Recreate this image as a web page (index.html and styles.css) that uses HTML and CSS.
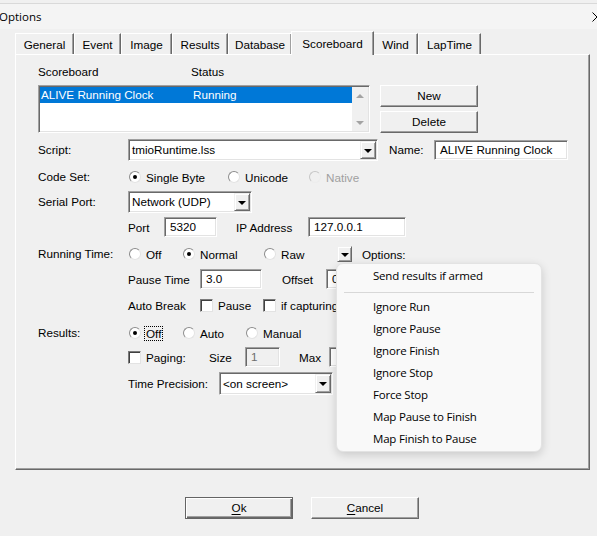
FILE: index.html
```html
<!DOCTYPE html>
<html>
<head>
<meta charset="utf-8">
<title>Options</title>
<link rel="stylesheet" href="styles.css">
</head>
<body>
<div class="window">
  <div class="topstrip"></div>
  <div class="titlebar">
    <span class="title">Options</span>
    <svg class="close" width="10" height="10" viewBox="0 0 10 10"><path d="M0.5 0.5 L9.5 9.5 M9.5 0.5 L0.5 9.5" stroke="#000" stroke-width="1" fill="none"/></svg>
  </div>
  <div class="tabs">
    <div class="tab t59">General</div>
    <div class="tab t47">Event</div>
    <div class="tab t51">Image</div>
    <div class="tab t56">Results</div>
    <div class="tab t64">Database</div>
    <div class="tab t81 active">Scoreboard</div>
    <div class="tab t45">Wind</div>
    <div class="tab t63">LapTime</div>
  </div>
  <div class="panel">
    <div class="hdr"><span class="hdr-name">Scoreboard</span><span>Status</span></div>
    <div class="listrow">
      <div class="listbox">
        <div class="listitems">
          <div class="item sel"><span class="c1">ALIVE Running Clock</span><span>Running</span></div>
        </div>
        <div class="vscroll"><i class="sarrow up"></i><i class="sarrow down"></i></div>
      </div>
      <div class="btncol">
        <button class="btn">New</button>
        <button class="btn">Delete</button>
      </div>
    </div>

    <div class="row r-script">
      <span class="lbl">Script:</span>
      <div class="combo w250 h22"><span class="val">tmioRuntime.lss</span><span class="dd"><i class="tri"></i></span></div>
      <span class="namelbl">Name:</span>
      <div class="field w134 h20">ALIVE Running Clock</div>
    </div>

    <div class="row r-codeset">
      <span class="lbl">Code Set:</span>
      <span class="opt first w99"><i class="radio on"></i>Single Byte</span>
      <span class="opt w81"><i class="radio"></i>Unicode</span>
      <span class="opt dis"><i class="radio"></i>Native</span>
    </div>

    <div class="row r-serial">
      <span class="lbl">Serial Port:</span>
      <div class="combo w124 h22"><span class="val">Network (UDP)</span><span class="dd"><i class="tri"></i></span></div>
    </div>

    <div class="row r-port sub">
      <span class="w36">Port</span>
      <div class="field w53 h20">5320</div>
      <span class="iplbl">IP Address</span>
      <div class="field w98 h20">127.0.0.1</div>
    </div>

    <div class="row r-running">
      <span class="lbl">Running Time:</span>
      <span class="opt first w54"><i class="radio"></i>Off</span>
      <span class="opt w81"><i class="radio on"></i>Normal</span>
      <span class="opt w73"><i class="radio"></i>Raw</span>
      <span class="ddbtn"><i class="tri"></i></span>
      <span>Options:</span>
    </div>

    <div class="row r-pause sub">
      <span class="w72">Pause Time</span>
      <div class="field w62 h20">3.0</div>
      <span class="offlbl">Offset</span>
      <div class="field w60 h20">0</div>
    </div>

    <div class="row r-auto sub">
      <span class="w72">Auto Break</span>
      <span class="opt w63"><i class="check"></i>Pause</span>
      <span class="opt"><i class="check"></i>if capturing</span>
    </div>

    <div class="row r-results">
      <span class="lbl">Results:</span>
      <span class="opt first w54"><i class="radio on"></i><span class="focus">Off</span></span>
      <span class="opt w63"><i class="radio"></i>Auto</span>
      <span class="opt"><i class="radio"></i>Manual</span>
    </div>

    <div class="row r-paging sub">
      <span class="opt w81"><i class="check"></i>Paging:</span>
      <span class="w36">Size</span>
      <div class="field disabled w35 h20">1</div>
      <span class="maxlbl">Max</span>
      <div class="field w40 h20"></div>
    </div>

    <div class="row r-tprec sub">
      <span class="w91">Time Precision:</span>
      <div class="combo w114 h23"><span class="val">&lt;on screen&gt;</span><span class="dd"><i class="tri"></i></span></div>
    </div>
  </div>

  <div class="footer">
    <button class="btn big def"><u>O</u>k</button>
    <button class="btn big"><u>C</u>ancel</button>
  </div>

  <div class="menu">
    <div class="mi">Send results if armed</div>
    <div class="msep"></div>
    <div class="mi">Ignore Run</div>
    <div class="mi">Ignore Pause</div>
    <div class="mi">Ignore Finish</div>
    <div class="mi">Ignore Stop</div>
    <div class="mi">Force Stop</div>
    <div class="mi">Map Pause to Finish</div>
    <div class="mi">Map Finish to Pause</div>
  </div>
</div>
</body>
</html>
```

FILE: styles.css
```css
* { box-sizing: border-box; }
html, body { margin: 0; padding: 0; }
body {
  width: 597px;
  height: 536px;
  overflow: hidden;
  background: #f0f0f0;
  font-family: "Liberation Sans", Arial, sans-serif;
  font-size: 11.7px;
  color: #000;
}
.window { position: relative; width: 597px; height: 536px; overflow: hidden; }

.topstrip { height: 4px; border-bottom: 1px solid #d9d9d9; background: #f0f0f0; }
.titlebar {
  height: 25px;
  display: flex;
  align-items: center;
  justify-content: space-between;
  background: #f4f4f4;
  font-family: "Open Sans", "Noto Sans", sans-serif;
  font-size: 11.5px;
}
.title { margin-left: -1px; }
.close { margin-right: -5px; }

/* tabs */
.tabs { display: flex; align-items: flex-end; height: 25px; padding-left: 15px; }
.tab {
  height: 21px;
  display: flex;
  align-items: center;
  justify-content: center;
  border-top: 1px solid #fff;
  border-left: 1px solid #fff;
  border-right: 1px solid #696969;
  box-shadow: inset -1px 0 #a0a0a0;
  background: #f0f0f0;
  padding-top: 1px;
}
.tab.active {
  position: relative;
  height: 24px;
  margin: 0 -1px -1px;
  padding-bottom: 2px;
}
.t59 { width: 59px; } .t47 { width: 47px; } .t51 { width: 51px; } .t56 { width: 56px; }
.t64 { width: 64px; } .t81 { width: 81px; } .t45 { width: 45px; } .t63 { width: 63px; }
.tab.t81.active { width: 83px; }

/* panel */
.panel {
  margin-left: 15px;
  width: 575px;
  height: 416px;
  border-top: 1px solid #fff;
  border-left: 1px solid #fff;
  border-right: 1px solid #696969;
  border-bottom: 1px solid #696969;
  box-shadow: inset -1px -1px #a0a0a0;
  padding: 10px 0 0 22px;
}
.hdr { height: 14px; line-height: 14px; display: flex; }
.hdr-name { width: 153px; }

.listrow { margin-top: 6px; height: 48px; display: flex; }
.listbox {
  width: 332px;
  height: 48px;
  background: #fff;
  border: 1px solid;
  border-color: #a0a0a0 #fff #fff #a0a0a0;
  box-shadow: inset 1px 1px #696969, inset -1px -1px #e3e3e3;
  padding: 1px;
  display: flex;
}
.listitems { flex: 1; }
.item { height: 16px; line-height: 16px; display: flex; padding-left: 1px; }
.item.sel { background: #0078d7; color: #fff; }
.c1 { width: 152px; }
.vscroll {
  width: 16px;
  background: #f0f0f0;
  display: flex;
  flex-direction: column;
  justify-content: space-between;
  align-items: center;
  padding: 7px 0 6px;
}
.sarrow { width: 0; height: 0; border-left: 4px solid transparent; border-right: 4px solid transparent; }
.sarrow.up { border-bottom: 4px solid #a3a3a3; }
.sarrow.down { border-top: 4px solid #a3a3a3; }

.btncol { margin-left: 10px; display: flex; flex-direction: column; gap: 4px; }
.btn {
  font: inherit;
  color: #000;
  width: 98px;
  height: 22px;
  padding: 0 0 1px;
  background: #f0f0f0;
  border: 1px solid;
  border-color: #fff #696969 #696969 #fff;
  box-shadow: inset -1px -1px #a0a0a0;
}
.btn.big { width: 108px; }
.btn.def {
  border: 1px solid #646464;
  box-shadow: inset 1px 1px #fff, inset -1px -1px #696969, inset -2px -2px #a0a0a0;
}
.btn u { text-decoration: underline; text-underline-offset: 2px; }

/* rows */
.row { display: flex; align-items: center; white-space: nowrap; }
.row.sub { padding-left: 90px; }
.lbl { width: 90px; padding-bottom: 1px; }
.r-script { margin-top: 6px; height: 22px; }
.r-codeset { margin-top: 6px; height: 20px; }
.r-serial { margin-top: 4px; height: 22px; }
.r-port { margin-top: 4px; height: 20px; }
.r-running { margin-top: 7px; height: 20px; }
.r-pause { margin-top: 5px; height: 20px; }
.r-auto { margin-top: 7px; height: 18px; }
.r-results { margin-top: 10px; height: 18px; }
.r-paging { margin-top: 5px; height: 20px; }
.r-tprec { margin-top: 5px; height: 23px; }

.w35 { width: 35px; } .w36 { width: 36px; } .w40 { width: 40px; } .w53 { width: 53px; }
.w54 { width: 54px; } .w60 { width: 60px; } .w62 { width: 62px; } .w63 { width: 63px; }
.w72 { width: 72px; } .w73 { width: 73px; } .w81 { width: 81px; } .w91 { width: 91px; }
.w98 { width: 98px; } .w99 { width: 99px; } .w114 { width: 114px; } .w124 { width: 124px; }
.w134 { width: 134px; } .w250 { width: 250px; }
.h20 { height: 20px; } .h22 { height: 22px; } .h23 { height: 23px; }

.field {
  flex: none;
  background: #fff;
  border: 1px solid;
  border-color: #a0a0a0 #fff #fff #a0a0a0;
  box-shadow: inset 1px 1px #696969, inset -1px -1px #e3e3e3;
  padding-left: 5px;
  padding-bottom: 1px;
  display: flex;
  align-items: center;
}
.field.disabled { background: #f0f0f0; color: #6d6d6d; }

.combo {
  flex: none;
  background: #fff;
  border: 1px solid;
  border-color: #a0a0a0 #fff #fff #a0a0a0;
  box-shadow: inset 1px 1px #696969, inset -1px -1px #e3e3e3;
  padding: 1px;
  display: flex;
  align-items: stretch;
}
.combo .val { flex: 1; display: flex; align-items: center; padding-left: 2px; padding-bottom: 1px; }
.dd, .ddbtn {
  width: 16px;
  display: flex;
  align-items: center;
  justify-content: center;
  background: #f0f0f0;
  border: 1px solid;
  border-color: #f0f0f0 #696969 #696969 #f0f0f0;
  box-shadow: inset 1px 1px #fff, inset -1px -1px #a0a0a0;
}
.ddbtn { width: 15px; height: 16px; margin-left: 0; margin-right: 10px; }
.tri {
  width: 0; height: 0;
  border-left: 4px solid transparent;
  border-right: 4px solid transparent;
  border-top: 4px solid #000;
  margin-top: 1px;
}

.namelbl { margin-left: 11px; width: 45px; padding-bottom: 1px; }
.iplbl { margin-left: 19px; width: 72px; }
.offlbl { margin-left: 20px; width: 44px; }
.maxlbl { margin-left: 19px; width: 30px; }

.opt { display: inline-flex; align-items: center; flex: none; }
.opt.first { margin-left: 1px; }
.opt.dis { color: #a0a0a0; }
.radio {
  width: 12px; height: 12px;
  border-radius: 50%;
  background: #fff;
  border: 1px solid;
  border-color: #8c8c8c #e3e3e3 #e3e3e3 #8c8c8c;
  margin-right: 5px;
  display: flex;
  align-items: center;
  justify-content: center;
  flex: none;
}
.radio.on::after {
  content: "";
  width: 4px; height: 4px;
  border-radius: 50%;
  background: #000;
}
.opt.dis .radio { border-color: #c6c6c6 #ececec #ececec #c6c6c6; background: #f0f0f0; }
.check {
  width: 13px; height: 13px;
  background: #fff;
  border: 1px solid;
  border-color: #7a7a7a #e3e3e3 #e3e3e3 #7a7a7a;
  box-shadow: inset 1px 1px #404040;
  margin-right: 5px;
  flex: none;
}
.focus { outline: 1px dotted #000; outline-offset: 0; padding: 0 1px; margin-left: -1px; }

/* footer */
.footer { margin-top: 27px; padding-left: 185px; display: flex; gap: 18px; }

/* popup menu */
.menu {
  position: absolute;
  left: 336px;
  top: 263px;
  width: 206px;
  height: 189px;
  background: #f9f9f9;
  border: 1px solid #e3e3e3;
  border-radius: 7px;
  box-shadow: 0 3px 10px rgba(0, 0, 0, 0.16);
  padding: 1px 0;
  font-family: "Open Sans", "Noto Sans", sans-serif;
  font-size: 11.5px;
  letter-spacing: -0.2px;
  color: #000;
}
.mi { height: 22px; line-height: 22px; padding-left: 36px; }
.msep { height: 1px; background: #d8d8d8; margin: 5px 7px 3px; }
```
